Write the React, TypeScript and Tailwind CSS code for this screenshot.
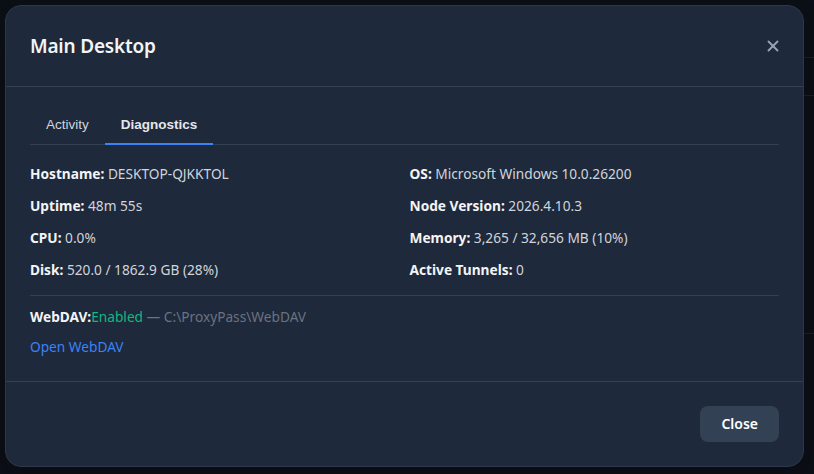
import { X } from 'lucide-react';

const left = [
  { label: 'Hostname', value: 'DESKTOP-QJKKTOL' },
  { label: 'Uptime', value: '48m 55s' },
  { label: 'CPU', value: '0.0%' },
  { label: 'Disk', value: '520.0 / 1862.9 GB (28%)' },
];

const right = [
  { label: 'OS', value: 'Microsoft Windows 10.0.26200' },
  { label: 'Node Version', value: '2026.4.10.3' },
  { label: 'Memory', value: '3,265 / 32,656 MB (10%)' },
  { label: 'Active Tunnels', value: '0' },
];

function Field({ label, value }: { label: string; value: string }) {
  return (
    <div className="text-[13.7px] leading-5 text-[#d1d5db]">
      <span className="font-bold text-[#f3f4f6]">{label}:</span> {value}
    </div>
  );
}

export default function App() {
  const rows = left.flatMap((l, i) => [l, right[i]]);

  return (
    <div className="relative min-h-[474px] w-full overflow-hidden bg-[#0b0f16] p-[5px] font-['Noto_Sans',sans-serif]">
      {/* faint page content behind the overlay */}
      <div className="absolute right-0 top-[57px] h-px w-[14px] bg-[#1a202b]" />
      <div className="absolute right-0 top-[95px] h-px w-[14px] bg-[#1a202b]" />
      <div className="absolute right-0 top-[333px] h-px w-[14px] bg-[#1a202b]" />

      <div className="relative flex w-[799px] flex-col rounded-2xl border border-[#2c3748] bg-[#1e293b] shadow-2xl">
        <div className="flex items-center justify-between border-b border-[#334155] py-[26px] pl-6 pr-[21px]">
          <h2 className="text-[19px] font-semibold leading-7 tracking-[-0.2px] text-[#f3f4f6]">Main Desktop</h2>
          <button className="text-[#94a3b8] hover:text-white">
            <X size={18} strokeWidth={2.5} />
          </button>
        </div>

        <div className="px-6 pb-6 pt-[22px]">
          <div className="flex border-b border-[#334155] font-['Liberation_Sans',sans-serif] text-[13.5px]">
            <button className="px-4 pb-[9px] pt-[6px] text-[#d1d5db]">Activity</button>
            <button className="-mb-px border-b-2 border-[#3b82f6] px-4 pb-[8px] pt-[6px] font-bold text-[#e5e7eb]">
              Diagnostics
            </button>
          </div>

          <div className="mt-[19px] grid grid-cols-2 gap-x-[10px] gap-y-3">
            {rows.map((r) => (
              <Field key={r.label} label={r.label} value={r.value} />
            ))}
          </div>

          <div className="mt-[15px] border-t border-[#334155] pt-[11px]">
            <div className="text-[13.7px] leading-5">
              <span className="font-bold text-[#f3f4f6]">WebDAV:</span>
              <span className="text-[#10b981]">Enabled</span>
              <span className="text-[#6b7280]"> — C:\ProxyPass\WebDAV</span>
            </div>
            <a href="#" className="mt-[10px] block w-fit text-[13.7px] leading-5 text-[#3b82f6] hover:underline">
              Open WebDAV
            </a>
          </div>
        </div>

        <div className="flex justify-end border-t border-[#334155] p-6">
          <button className="rounded-lg bg-[#334155] px-[21px] py-2 text-sm font-semibold leading-5 text-white hover:bg-[#475569]">
            Close
          </button>
        </div>
      </div>
    </div>
  );
}
